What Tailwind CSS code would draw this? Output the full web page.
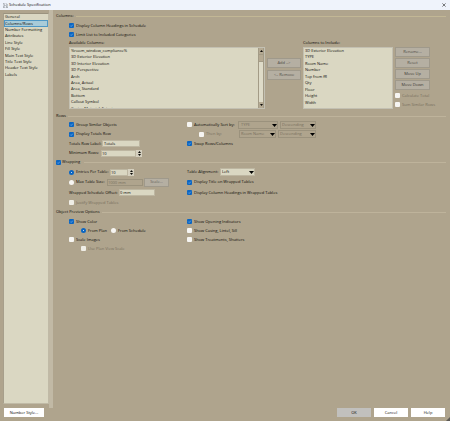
<!DOCTYPE html>
<html lang="en">
<head>
<meta charset="utf-8">
<title>Schedule Specification</title>
<script src="https://cdn.jsdelivr.net/npm/@tailwindcss/browser@4"></script>
</head>
<body class="relative flex h-screen flex-col overflow-hidden bg-[#afa48d] font-['Open_Sans','Noto_Sans',sans-serif] text-[4px] leading-[6px] text-[#0c0b08]">
<svg class="hidden">
  <symbol id="tick" viewBox="0 0 10 10"><path d="M2.5 5.2 4.3 7 7.7 3.3" fill="none" stroke="#8fc0f0" stroke-width="1.2"/></symbol>
  <symbol id="down" viewBox="0 0 10 6"><path d="M0 0H10L5 6Z" fill="currentColor"/></symbol>
  <symbol id="up" viewBox="0 0 10 6"><path d="M0 6H10L5 0Z" fill="currentColor"/></symbol>
</svg>

<header class="flex h-[10px] shrink-0 items-center bg-[#eff3fb] pl-[3px] pr-1">
  <svg class="mr-[1px] size-[5px]" viewBox="0 0 15 15" fill="none" stroke="#55585c" stroke-width="1.3"><path d="M1 5V1H5M1 8v6h6M4 11V5l4 3M8 2l5 2-3 3 4 2-4 2 4 3H9"/></svg>
  <h1 class="flex-1">Schedule Specification</h1>
  <button aria-label="Close" class="size-1"><svg class="size-1" viewBox="0 0 10 10" stroke="#333" stroke-width="1.6"><path d="M1 1 9 9M9 1 1 9"/></svg></button>
</header>

<div class="flex min-h-0 flex-1">
  <nav class="mb-1 ml-[3px] mt-[3px] w-[46px] shrink-0 border border-[#c0baa6] border-t-[#9b937f] border-l-[#a79f8b] bg-[#dad7c2]">
    <ul class="grid h-16 grid-rows-10 leading-[6px]">
      <li class="flex items-center"><a href="#" class="pl-[1px]">General</a></li>
      <li class="flex"><a href="#" aria-current="page" class="flex flex-1 items-center bg-[#a9cbd8] pl-[1px] outline outline-[#4f97c4] -outline-offset-1">Columns/Rows</a></li>
      <li class="flex items-center"><a href="#" class="pl-[1px]">Number Formatting</a></li>
      <li class="flex items-center"><a href="#" class="pl-[1px]">Attributes</a></li>
      <li class="flex items-center"><a href="#" class="pl-[1px]">Line Style</a></li>
      <li class="flex items-center"><a href="#" class="pl-[1px]">Fill Style</a></li>
      <li class="flex items-center"><a href="#" class="pl-[1px]">Main Text Style</a></li>
      <li class="flex items-center"><a href="#" class="pl-[1px]">Title Text Style</a></li>
      <li class="flex items-center"><a href="#" class="pl-[1px]">Header Text Style</a></li>
      <li class="flex items-center"><a href="#" class="pl-[1px]">Labels</a></li>
    </ul>
  </nav>
  <div class="w-1 shrink-0 bg-[#c1b9a5]"></div>

  <main class="min-w-0 flex-1 pl-[3px] pr-1 pt-[2px]">
    <section>
      <h2 class="flex h-2 items-center gap-[2px]">Columns:<span class="h-px flex-1 bg-[#c2b795]"></span></h2>
      <div class="pl-[13px] pt-[1px]">
        <label class="flex h-[9px] items-center gap-[2px]"><span class="grid size-[5px]"><input type="checkbox" checked class="col-start-1 row-start-1 size-[5px] appearance-none rounded-[1px] bg-[#0b66c3]"><svg class="pointer-events-none col-start-1 row-start-1 size-[5px]"><use href="#tick"/></svg></span>Display Column Headings in Schedule</label>
        <label class="flex h-[9px] items-center gap-[2px]"><span class="grid size-[5px]"><input type="checkbox" checked class="col-start-1 row-start-1 size-[5px] appearance-none rounded-[1px] bg-[#0b66c3]"><svg class="pointer-events-none col-start-1 row-start-1 size-[5px]"><use href="#tick"/></svg></span>Limit List to Included Categories</label>
        <div class="flex gap-[2px]">
          <div class="min-w-0 flex-1">
            <h3 class="flex h-2 items-center">Available Columns:</h3>
            <div class="flex h-[62px] border border-[#c3c0b2] bg-[#dad7c2]">
              <div class="h-[60px] flex-1 overflow-hidden">
                <ul class="grid h-16 grid-rows-10 pl-[1px]">
                  <li>%room_window_compliance%</li>
                  <li>3D Exterior Elevation</li>
                  <li>3D Interior Elevation</li>
                  <li>3D Perspective</li>
                  <li>Arch</li>
                  <li>Area, Actual</li>
                  <li>Area, Standard</li>
                  <li>Bottom</li>
                  <li>Callout Symbol</li>
                  <li>Casing Material, Exterior</li>
                </ul>
              </div>
              <div class="flex w-[6px] flex-col justify-between border-x border-[#a39b86] bg-[#dedbc8]">
                <div>
                  <button aria-label="Scroll up" class="flex h-[6px] w-full items-center justify-center bg-[#b5aa93]"><svg class="h-[2px] w-[3px]"><use href="#up"/></svg></button>
                  <div class="mt-[1px] h-[6px] bg-[#b5aa93] outline outline-[#a39b86]"></div>
                </div>
                <button aria-label="Scroll down" class="flex h-[6px] w-full items-center justify-center bg-[#b5aa93]"><svg class="h-[2px] w-[3px]"><use href="#down"/></svg></button>
              </div>
            </div>
          </div>
          <div class="flex w-[34px] shrink-0 flex-col gap-[2px] pt-[19px] text-[#4f4c46]">
            <button disabled class="h-[10px] border border-[#9f998b] bg-[#b5afa2]">Add =&gt;</button>
            <button disabled class="h-[10px] border border-[#9f998b] bg-[#b5afa2]">&lt;= Remove</button>
          </div>
          <div class="w-[90px] shrink-0">
            <h3 class="flex h-2 items-center">Columns to Include:</h3>
            <div class="h-[62px] border border-[#c3c0b2] bg-[#dad7c2]">
              <ul class="grid h-[58px] grid-rows-9 pl-[1px]">
                <li>3D Exterior Elevation</li>
                <li>TYPE</li>
                <li>Room Name</li>
                <li>Number</li>
                <li>Top from ffl</li>
                <li>Qty</li>
                <li>Floor</li>
                <li>Height</li>
                <li>Width</li>
              </ul>
            </div>
          </div>
          <div class="flex w-[51px] shrink-0 flex-col pt-2 text-[#4f4c46]">
            <div class="grid w-[35px] gap-[1px]">
              <button disabled class="h-[10px] border border-[#9f998b] bg-[#b5afa2]">Rename...</button>
              <button disabled class="h-[10px] border border-[#9f998b] bg-[#b5afa2]">Reset</button>
              <button disabled class="h-[10px] border border-[#9f998b] bg-[#b5afa2] text-[#3c3933]">Move Up</button>
              <button disabled class="h-[10px] border border-[#9f998b] bg-[#b5afa2] text-[#3c3933]">Move Down</button>
            </div>
            <label class="mt-[1px] flex h-[9px] items-center gap-[2px] text-[#786f5d]"><input type="checkbox" disabled class="size-[5px] appearance-none rounded-[1px] bg-[#f6f5f2]">Calculate Total</label>
            <label class="flex h-[9px] items-center gap-[2px] text-[#786f5d]"><input type="checkbox" disabled class="size-[5px] appearance-none rounded-[1px] bg-[#f6f5f2]">Sum Similar Rows</label>
          </div>
        </div>
      </div>
    </section>

    <section class="pt-[3px]">
      <h2 class="flex h-2 items-center gap-[2px]">Rows<span class="h-px flex-1 bg-[#beb39b]"></span></h2>
      <div class="flex pl-[13px]">
        <div class="grid h-[38px] w-[118px] shrink-0 grid-rows-4">
          <label class="flex items-center gap-[2px]"><span class="grid size-[5px]"><input type="checkbox" checked class="col-start-1 row-start-1 size-[5px] appearance-none rounded-[1px] bg-[#0b66c3]"><svg class="pointer-events-none col-start-1 row-start-1 size-[5px]"><use href="#tick"/></svg></span>Group Similar Objects</label>
          <label class="flex items-center gap-[2px]"><span class="grid size-[5px]"><input type="checkbox" checked class="col-start-1 row-start-1 size-[5px] appearance-none rounded-[1px] bg-[#0b66c3]"><svg class="pointer-events-none col-start-1 row-start-1 size-[5px]"><use href="#tick"/></svg></span>Display Totals Row</label>
          <div class="flex items-center"><label for="totals" class="w-[33px]">Totals Row Label:</label><input id="totals" value="Totals" class="h-[7px] w-[38px] border border-[#bdb6a1] bg-[#dad7c2] pl-[1px]"></div>
          <div class="flex items-center"><label for="minrows" class="w-8">Minimum Rows:</label><input id="minrows" value="10" class="h-[7px] w-[35px] border border-[#bdb6a1] bg-[#dad7c2]"><span class="flex h-[7px] w-[6px] flex-col items-center justify-between bg-[#d5d0bf] py-[1px]"><svg class="h-[2px] w-[3px]"><use href="#up"/></svg><svg class="h-[2px] w-[3px]"><use href="#down"/></svg></span></div>
        </div>
        <div class="grid h-[38px] grid-rows-4">
          <div class="flex items-center"><label class="flex w-[51px] items-center gap-[2px]"><input type="checkbox" class="size-[5px] appearance-none rounded-[1px] bg-[#f6f5f2]">Automatically Sort by:</label>
            <span class="relative flex w-10 text-[#786f5d]"><select disabled aria-label="Sort column" class="h-2 w-full appearance-none border border-[#9b927d] pl-[2px] opacity-100"><option>TYPE</option></select><svg class="pointer-events-none absolute right-[1px] top-[3px] h-[3px] w-[5px] text-black"><use href="#down"/></svg></span>
            <span class="relative ml-[2px] flex w-9 text-[#786f5d]"><select disabled aria-label="Sort direction" class="h-2 w-full appearance-none border border-[#9b927d] pl-[1px] opacity-100"><option>Descending</option></select><svg class="pointer-events-none absolute right-[1px] top-[3px] h-[3px] w-[5px] text-black"><use href="#down"/></svg></span>
          </div>
          <div class="flex items-center"><label class="flex w-[52px] items-center gap-[2px] pl-3 text-[#786f5d]"><input type="checkbox" disabled class="size-[5px] appearance-none rounded-[1px] bg-[#f6f5f2]">Then by:</label>
            <span class="relative flex w-[37px] text-[#786f5d]"><select disabled aria-label="Second sort column" class="h-2 w-full appearance-none border border-[#9b927d] pl-[1px] opacity-100"><option>Room Name</option></select><svg class="pointer-events-none absolute right-[1px] top-[3px] h-[3px] w-[5px] text-black"><use href="#down"/></svg></span>
            <span class="relative ml-[2px] flex w-[38px] text-[#786f5d]"><select disabled aria-label="Second sort direction" class="h-2 w-full appearance-none border border-[#9b927d] pl-[1px] opacity-100"><option>Descending</option></select><svg class="pointer-events-none absolute right-[1px] top-[3px] h-[3px] w-[5px] text-black"><use href="#down"/></svg></span>
          </div>
          <label class="flex items-center gap-[2px]"><span class="grid size-[5px]"><input type="checkbox" checked class="col-start-1 row-start-1 size-[5px] appearance-none rounded-[1px] bg-[#0b66c3]"><svg class="pointer-events-none col-start-1 row-start-1 size-[5px]"><use href="#tick"/></svg></span>Swap Rows/Columns</label>
        </div>
      </div>
    </section>

    <section>
      <div class="flex h-2 items-center gap-1"><label class="flex items-center gap-[1px]"><span class="grid size-[5px]"><input type="checkbox" checked class="col-start-1 row-start-1 size-[5px] appearance-none rounded-[1px] bg-[#0b66c3]"><svg class="pointer-events-none col-start-1 row-start-1 size-[5px]"><use href="#tick"/></svg></span>Wrapping</label><span class="h-px flex-1 bg-[#beb39b]"></span></div>
      <div class="flex pl-[13px] pt-[1px]">
        <div class="grid h-[41px] w-[118px] shrink-0 grid-rows-4">
          <div class="flex items-center"><label class="flex w-[41px] items-center gap-[2px]"><input type="radio" name="wrap" checked class="size-[5px] appearance-none rounded-full border-2 border-[#0b66c3] bg-white">Entries Per Table:</label><input aria-label="Entries per table" value="10" class="h-[7px] w-[18px] border border-[#bdb6a1] bg-[#dad7c2]"><span class="flex h-[7px] w-[6px] flex-col items-center justify-between bg-[#d5d0bf] py-[1px]"><svg class="h-[2px] w-[3px]"><use href="#up"/></svg><svg class="h-[2px] w-[3px]"><use href="#down"/></svg></span></div>
          <div class="flex items-center"><label class="flex w-[38px] items-center gap-[2px]"><input type="radio" name="wrap" class="size-[5px] appearance-none rounded-full bg-[#f6f5f2]">Max Table Size:</label><input disabled aria-label="Max table size" value="1000 mm" class="h-[7px] w-9 border border-[#9b927d] text-[#786f5d]"><button disabled class="ml-[1px] h-[9px] w-[25px] border border-[#9f998b] bg-[#b5afa2] text-[#66625b]">Scale...</button></div>
          <div class="flex items-center"><label for="offset" class="w-[50px]">Wrapped Schedule Offset:</label><input id="offset" value="0 mm" class="h-[7px] w-9 border border-[#bdb6a1] bg-[#dad7c2]"></div>
          <label class="flex items-center gap-[2px] text-[#786f5d]"><input type="checkbox" disabled class="size-[5px] appearance-none rounded-[1px] bg-[#efede6]">Justify Wrapped Tables</label>
        </div>
        <div class="grid h-[41px] grid-rows-4">
          <div class="flex items-center"><label for="align" class="w-[33px]">Table Alignment:</label><span class="relative flex w-[35px]"><select id="align" class="h-2 w-full appearance-none border border-[#bdb6a1] bg-[#dad7c2] pl-[1px]"><option>Left</option></select><svg class="pointer-events-none absolute right-[1px] top-[3px] h-[3px] w-[5px] text-black"><use href="#down"/></svg></span></div>
          <label class="flex items-center gap-[2px]"><span class="grid size-[5px]"><input type="checkbox" checked class="col-start-1 row-start-1 size-[5px] appearance-none rounded-[1px] bg-[#0b66c3]"><svg class="pointer-events-none col-start-1 row-start-1 size-[5px]"><use href="#tick"/></svg></span>Display Title on Wrapped Tables</label>
          <label class="flex items-center gap-[2px]"><span class="grid size-[5px]"><input type="checkbox" checked class="col-start-1 row-start-1 size-[5px] appearance-none rounded-[1px] bg-[#0b66c3]"><svg class="pointer-events-none col-start-1 row-start-1 size-[5px]"><use href="#tick"/></svg></span>Display Column Headings in Wrapped Tables</label>
        </div>
      </div>
    </section>

    <section>
      <h2 class="flex h-2 items-center gap-[2px]">Object Preview Options<span class="h-px flex-1 bg-[#beb39b]"></span></h2>
      <div class="flex pl-[13px] pt-[1px]">
        <div class="grid h-9 w-[118px] shrink-0 grid-rows-4">
          <label class="flex items-center gap-[2px]"><span class="grid size-[5px]"><input type="checkbox" checked class="col-start-1 row-start-1 size-[5px] appearance-none rounded-[1px] bg-[#0b66c3]"><svg class="pointer-events-none col-start-1 row-start-1 size-[5px]"><use href="#tick"/></svg></span>Show Color</label>
          <div class="flex items-center pl-3"><label class="flex w-[30px] items-center gap-[2px]"><input type="radio" name="color" checked class="size-[5px] appearance-none rounded-full border-2 border-[#0b66c3] bg-white">From Plan</label><label class="flex items-center gap-[2px]"><input type="radio" name="color" class="size-[5px] appearance-none rounded-full bg-[#f6f5f2]">From Schedule</label></div>
          <label class="flex items-center gap-[2px]"><input type="checkbox" class="size-[5px] appearance-none rounded-[1px] bg-[#f6f5f2]">Scale Images</label>
          <label class="flex items-center gap-[2px] pl-3 text-[#786f5d]"><input type="checkbox" disabled class="size-[5px] appearance-none rounded-[1px] bg-[#efede6]">Use Plan View Scale</label>
        </div>
        <div class="grid h-9 grid-rows-4">
          <label class="flex items-center gap-[2px]"><span class="grid size-[5px]"><input type="checkbox" checked class="col-start-1 row-start-1 size-[5px] appearance-none rounded-[1px] bg-[#0b66c3]"><svg class="pointer-events-none col-start-1 row-start-1 size-[5px]"><use href="#tick"/></svg></span>Show Opening Indicators</label>
          <label class="flex items-center gap-[2px]"><input type="checkbox" class="size-[5px] appearance-none rounded-[1px] bg-[#f6f5f2]">Show Casing, Lintel, Sill</label>
          <label class="flex items-center gap-[2px]"><input type="checkbox" class="size-[5px] appearance-none rounded-[1px] bg-[#f6f5f2]">Show Treatments, Shutters</label>
        </div>
      </div>
    </section>
  </main>
</div>

<footer class="flex shrink-0 gap-[3px] pb-1 pl-1 pr-[5px]">
  <button class="mr-auto h-[9px] w-10 bg-white">Number Style...</button>
  <button class="h-[9px] w-[34px] bg-[#c1c0bd]">OK</button>
  <button class="h-[9px] w-[34px] bg-white">Cancel</button>
  <button class="h-[9px] w-[34px] bg-white">Help</button>
</footer>
<svg class="absolute bottom-0 right-0 size-1" viewBox="0 0 4 4"><path d="M4 0V4H0Z" fill="#5d5a55"/></svg>
</body>
</html>
